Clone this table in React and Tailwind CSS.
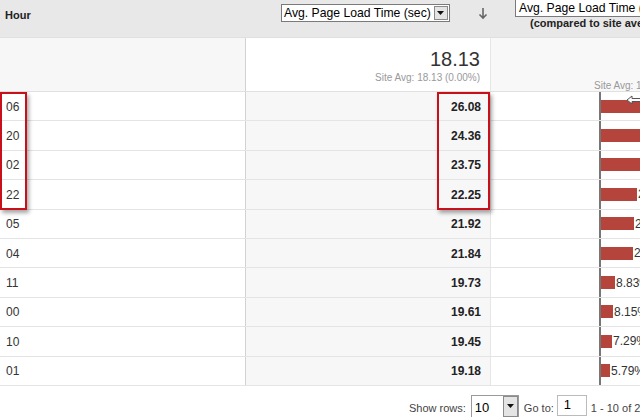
import React from "react";

const rows = [
  { h: "06", v: "26.08", w: 70, p: "43.85%" },
  { h: "20", v: "24.36", w: 55, p: "34.36%" },
  { h: "02", v: "23.75", w: 50, p: "31.00%" },
  { h: "22", v: "22.25", w: 36, p: "22.73%" },
  { h: "05", v: "21.92", w: 33, p: "20.90%" },
  { h: "04", v: "21.84", w: 32, p: "20.46%" },
  { h: "11", v: "19.73", w: 14, p: "8.83%" },
  { h: "00", v: "19.61", w: 12, p: "8.15%" },
  { h: "10", v: "19.45", w: 11, p: "7.29%" },
  { h: "01", v: "19.18", w: 9, p: "5.79%" },
];

const DropButton = ({ className }) => (
  <span className={`shrink-0 flex items-center justify-center border border-[#8a8a8a] bg-[#e4e4e4] ${className}`}>
    <svg width="7" height="4" viewBox="0 0 7 4">
      <path d="M0 0H7L3.5 4Z" fill="#111" />
    </svg>
  </span>
);

const LeftArrow = () => (
  <svg width="16" height="10" viewBox="0 0 16 10" className="absolute left-[135px] top-[3px]">
    <path d="M1 5L6 1V3.5H16V6.5H6V9Z" fill="#fff" stroke="#555" strokeWidth="1" strokeLinejoin="round" />
  </svg>
);

export default function App() {
  return (
    <div className="relative w-[640px] h-[417px] overflow-hidden bg-white text-[#333] font-['Liberation_Sans',Arial,sans-serif]">
      {/* header */}
      <div className="flex h-[37px] bg-[#e8e8e8] w-[900px]">
        <div className="w-[246px] shrink-0 pl-[5px] pt-[7px] text-[11px] font-bold text-[#222]">Hour</div>
        <div className="w-[244px] shrink-0 flex items-start pt-[4px] pl-[35px]">
          <div className="flex items-center h-[18px] border border-[#7a7a7a] bg-white pl-[2px] pr-[1px]">
            <span className="text-[12.2px] leading-[16px] text-black whitespace-nowrap">Avg. Page Load Time (sec)</span>
            <DropButton className="w-[14px] h-[14px] ml-[3px]" />
          </div>
          <svg width="10" height="13" viewBox="0 0 10 13" className="ml-[28px] mt-[3px]">
            <path d="M5 1V11M1.5 7.5L5 11L8.5 7.5" stroke="#666" strokeWidth="1.6" fill="none" />
          </svg>
        </div>
        <div className="flex-1 flex flex-col items-start pl-[25px]">
          <div className="h-[17px] border border-[#7a7a7a] border-t-0 bg-white pl-[3px] pr-[20px] text-[12.2px] leading-[16px] text-black whitespace-nowrap">
            Avg. Page Load Time (sec)
          </div>
          <div className="pl-[15px] text-[11px] font-bold leading-[13px] text-[#222] whitespace-nowrap">(compared to site average)</div>
        </div>
      </div>

      {/* summary row */}
      <div className="flex h-[55px] border-t border-b border-[#e0e0e0] w-[900px]">
        <div className="w-[246px] shrink-0 bg-[#f7f7f7] border-r border-[#d2d2d2]" />
        <div className="w-[244px] shrink-0 flex flex-col items-end pr-[10px] pt-[9px] bg-white">
          <span className="text-[20px] leading-[25px] text-[#333]">18.13</span>
          <span className="text-[10px] leading-[12px] text-[#999]">Site Avg: 18.13 (0.00%)</span>
        </div>
        <div className="flex-1 bg-[#f8f8f8] border-l border-[#e6e6e6] pl-[103px] pt-[34px]">
          <span className="text-[10px] leading-[12px] text-[#999] whitespace-nowrap">Site Avg: 18.13</span>
        </div>
      </div>

      {/* data rows */}
      {rows.map((r, i) => (
        <div key={r.h} className="flex h-[29.4px] border-b border-[#e4e4e4] w-[900px]">
          <div className="w-[246px] shrink-0 border-r border-[#d2d2d2] pl-[6px] pt-[1px] flex items-center text-[12px] text-[#333]">{r.h}</div>
          <div className="w-[244px] shrink-0 bg-[#f7f7f7] flex items-center justify-end pr-[9px] pt-[1px] text-[12px] font-bold text-[#222]">{r.v}</div>
          <div className="relative flex-1 border-l border-[#e6e6e6] pl-[108px] flex">
            <div className="border-l-2 border-[#777] flex items-center">
              <div className="h-[13px] bg-[#b5443c]" style={{ width: r.w }} />
              <span className="text-[12px] text-[#333] pl-[1px]">{r.p}</span>
            </div>
            {i === 0 && <LeftArrow />}
          </div>
        </div>
      ))}

      {/* footer */}
      <div className="flex items-start w-[900px] pl-[409px] pt-[9px] text-[11px] text-[#444] whitespace-nowrap">
        <span className="shrink-0 mt-[5px]">Show rows:</span>
        <div className="shrink-0 ml-[5px] flex items-stretch w-[48px] h-[23px] border border-[#9a9a9a] bg-white">
          <span className="flex-1 pl-[3px] pt-[4px] text-[13px] leading-[16px] text-black">10</span>
          <DropButton className="w-[15px]" />
        </div>
        <span className="shrink-0 ml-[5px] mt-[5px]">Go to:</span>
        <div className="shrink-0 ml-[3px] w-[30px] h-[21px] border border-[#bbb] pl-[6px] text-[13px] text-black leading-[17px]">1</div>
        <span className="shrink-0 ml-[4px] mt-[5px]">1 - 10 of 24</span>
      </div>

      {/* highlight boxes */}
      <div className="absolute left-0 top-[92px] w-[27px] h-[118px] border-2 border-[#c8101a] shadow-[2px_3px_4px_rgba(0,0,0,0.35)]" />
      <div className="absolute left-[437px] top-[92px] w-[53px] h-[118px] border-2 border-[#c8101a] shadow-[2px_3px_4px_rgba(0,0,0,0.35)]" />
    </div>
  );
}
